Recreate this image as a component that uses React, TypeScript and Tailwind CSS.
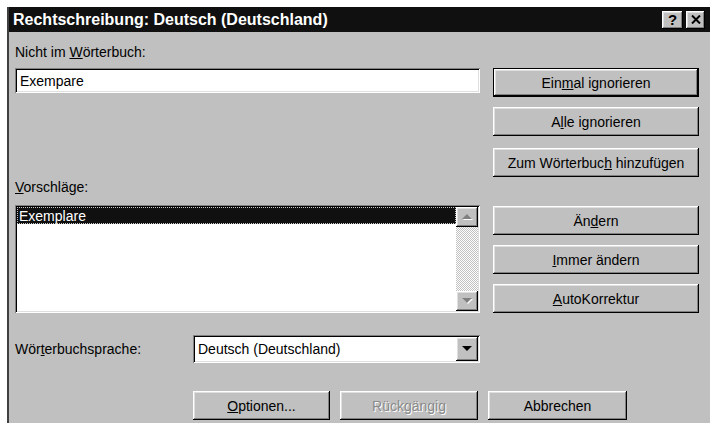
import React from "react";

const raised =
  "bg-[#c0c0c0] shadow-[inset_-1px_-1px_0_#000,inset_1px_1px_0_#fff,inset_-2px_-2px_0_#808080,inset_2px_2px_0_#dfdfdf]";
const sunken =
  "bg-white shadow-[inset_1px_1px_0_#808080,inset_-1px_-1px_0_#fff,inset_2px_2px_0_#000,inset_-2px_-2px_0_#dfdfdf]";

function Btn({
  children,
  className = "",
  isDefault = false,
  disabled = false,
}: {
  children: React.ReactNode;
  className?: string;
  isDefault?: boolean;
  disabled?: boolean;
}) {
  return (
    <div
      className={`flex h-[29px] items-center justify-center ${
        isDefault ? "border border-black" : ""
      } ${raised} ${className}`}
    >
      <span
        className={
          disabled
            ? "text-[#8a8a8a] [text-shadow:1px_1px_0_#fff]"
            : "text-black"
        }
      >
        {children}
      </span>
    </div>
  );
}

function Arrow({ up, dim }: { up?: boolean; dim?: boolean }) {
  const pts = up ? "1,6 6,1 11,6" : "1,1 6,6 11,1";
  return (
    <svg width="12" height="8" viewBox="0 0 12 8">
      {dim && (
        <polygon points={up ? "2,7 7,2 12,7" : "2,2 7,7 12,2"} fill="#fff" />
      )}
      <polygon points={pts} fill={dim ? "#808080" : "#000"} />
    </svg>
  );
}

export default function App() {
  return (
    <div className="h-[423px] w-[710px] overflow-hidden bg-white pl-[7px] pt-[7px] font-['Liberation_Sans',Arial,sans-serif] text-[14px] leading-4 text-black">
      <div className="flex h-full flex-col border-l-2 border-[#404040]">
        {/* caption bar */}
        <div className="flex h-[25px] items-center bg-[#101010] pl-[4px] pr-[5px]">
          <span className="flex-1 text-[16px] font-bold text-white">
            Rechtschreibung: Deutsch (Deutschland)
          </span>
          <div className={`flex h-[18px] w-[21px] items-center justify-center text-[15px] font-bold ${raised}`}>
            ?
          </div>
          <div className={`ml-[3px] flex h-[18px] w-[19px] items-center justify-center ${raised}`}>
            <svg width="10" height="9" viewBox="0 0 10 9">
              <path d="M1 0.5 L9 8.5 M9 0.5 L1 8.5" stroke="#000" strokeWidth="2" />
            </svg>
          </div>
        </div>

        <div className="flex-1 bg-[#c0c0c0] pl-[6px]">
          <div className="flex">
            {/* left column */}
            <div className="flex w-[465px] flex-col">
              <div className="mt-[12px]">
                Nicht im <span className="underline">W</span>örterbuch:
              </div>
              <div className={`mt-[8px] flex h-[25px] items-center pl-[5px] ${sunken}`}>
                Exempare
              </div>
              <div className="mt-[86px]">
                <span className="underline">V</span>orschläge:
              </div>
              <div className={`mt-[10px] flex h-[108px] p-[2px] ${sunken}`}>
                <div className="flex-1">
                  <div className="flex h-[17px] items-center bg-[#101010] pl-[2px] text-white outline outline-1 -outline-offset-1 outline-dotted outline-[#c8c8c8]">
                    Exemplare
                  </div>
                </div>
                <div className="flex w-[22px] flex-col">
                  <div className={`flex h-[20px] items-center justify-center ${raised}`}>
                    <Arrow up dim />
                  </div>
                  <div className="flex-1 bg-[repeating-conic-gradient(#c0c0c0_0_25%,#fff_0_50%)] bg-[length:2px_2px]" />
                  <div className={`flex h-[20px] items-center justify-center ${raised}`}>
                    <Arrow dim />
                  </div>
                </div>
              </div>
            </div>

            {/* action buttons */}
            <div className="ml-[13px] flex w-[206px] flex-col">
              <Btn isDefault className="mt-[36px]">
                Ein<span className="underline">m</span>al ignorieren
              </Btn>
              <Btn className="mt-[10px]">
                A<span className="underline">l</span>le ignorieren
              </Btn>
              <Btn className="mt-[12px]">
                Zum Wörterbuc<span className="underline">h</span> hinzufügen
              </Btn>
              <Btn className="mt-[29px]">
                Än<span className="underline">d</span>ern
              </Btn>
              <Btn className="mt-[10px]">
                <span className="underline">I</span>mmer ändern
              </Btn>
              <Btn className="mt-[10px]">
                <span className="underline">A</span>utoKorrektur
              </Btn>
            </div>
          </div>

          {/* dictionary language */}
          <div className="mt-[22px] flex items-center">
            <div className="w-[178px]">
              Wör<span className="underline">t</span>erbuchsprache:
            </div>
            <div className={`flex h-[28px] w-[287px] items-center p-[2px] ${sunken}`}>
              <span className="flex-1 pl-[3px]">Deutsch (Deutschland)</span>
              <div className={`flex h-full w-[22px] items-center justify-center ${raised}`}>
                <Arrow />
              </div>
            </div>
          </div>

          {/* bottom buttons */}
          <div className="ml-[178px] mt-[28px] flex gap-[10px]">
            <Btn className="w-[137px]">
              <span className="underline">O</span>ptionen...
            </Btn>
            <Btn disabled className="w-[138px]">
              Rückgängig
            </Btn>
            <Btn className="w-[139px]">Abbrechen</Btn>
          </div>
        </div>
      </div>
    </div>
  );
}
